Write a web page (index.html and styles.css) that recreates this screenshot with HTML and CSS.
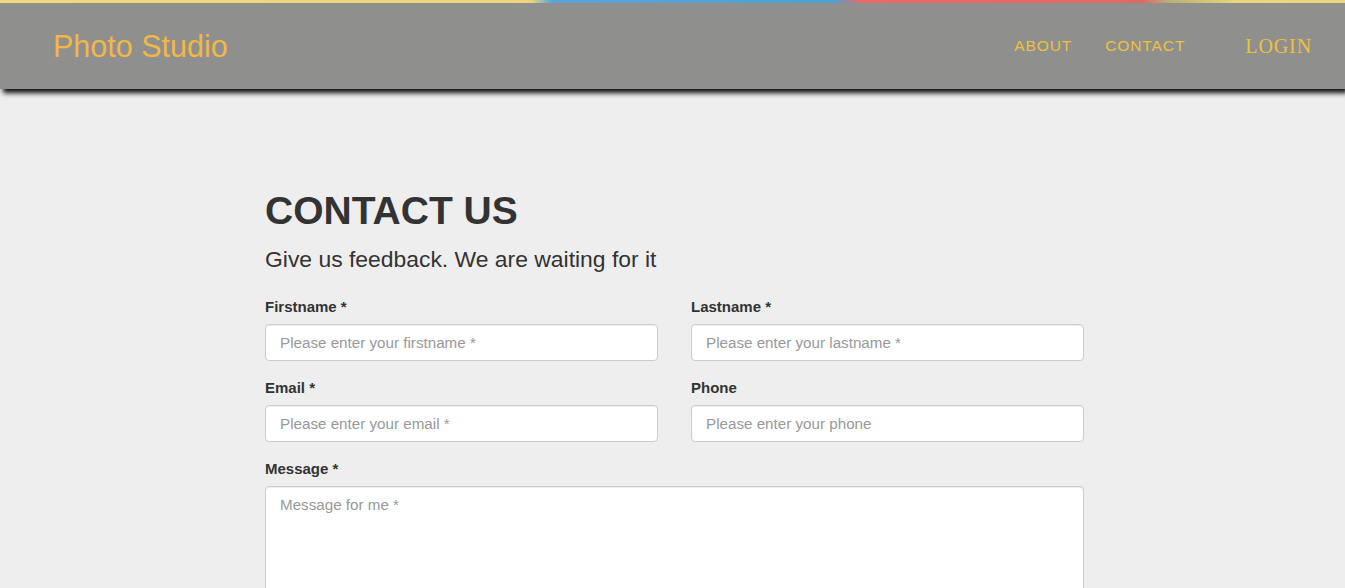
FILE: index.html
```html
<!DOCTYPE html>
<html lang="en">
<head>
<meta charset="utf-8">
<title>Photo Studio - Contact</title>
<link rel="stylesheet" href="styles.css">
</head>
<body>
<header class="navbar">
  <div class="stripe"></div>
  <div class="nav-inner">
    <a class="brand" href="#">Photo Studio</a>
    <nav class="nav-links">
      <a class="nav-link" href="#">ABOUT</a>
      <a class="nav-link" href="#">CONTACT</a>
      <a class="nav-login" href="#">LOGIN</a>
    </nav>
  </div>
</header>
<main class="content">
  <h1 class="title">CONTACT US</h1>
  <p class="lead">Give us feedback. We are waiting for it</p>
  <form class="form">
    <div class="field">
      <label class="label">Firstname *</label>
      <input class="input" type="text" placeholder="Please enter your firstname *">
    </div>
    <div class="field">
      <label class="label">Lastname *</label>
      <input class="input" type="text" placeholder="Please enter your lastname *">
    </div>
    <div class="field">
      <label class="label">Email *</label>
      <input class="input" type="email" placeholder="Please enter your email *">
    </div>
    <div class="field">
      <label class="label">Phone</label>
      <input class="input" type="tel" placeholder="Please enter your phone">
    </div>
    <div class="field field-wide">
      <label class="label">Message *</label>
      <textarea class="input textarea" placeholder="Message for me *"></textarea>
    </div>
  </form>
</main>
</body>
</html>
```

FILE: styles.css
```css
* { box-sizing: border-box; }
html, body { margin: 0; padding: 0; }
body {
  background: #eeeeee;
  font-family: "Liberation Sans", Arial, sans-serif;
  color: #333333;
  overflow: hidden;
}
.navbar {
  background: #8f908e;
  height: 89px;
  box-shadow: 3px 4px 5px rgba(0,0,0,0.95);
  position: relative;
  z-index: 2;
}
.stripe {
  height: 3px;
  background: linear-gradient(to right,
    #f2d87a 0%, #f0d47c 39.5%, #5aa6d8 41%, #4f9fd3 62%,
    #e86a6a 64%, #e26868 85%, #b8b07a 87%, #e8d77a 92%, #ead67c 100%);
}
.nav-inner {
  height: 86px;
  display: flex;
  align-items: center;
  justify-content: space-between;
  padding: 0 33px 0 53px;
}
.brand {
  color: #f3b746;
  font-size: 30.5px;
  text-decoration: none;
}
.nav-links {
  display: flex;
  align-items: center;
}
.nav-link {
  color: #eec13c;
  font-size: 15.5px;
  letter-spacing: 0.9px;
  text-decoration: none;
  margin-left: 33px;
}
.nav-link:first-child { margin-left: 0; }
.nav-login {
  color: #eec13c;
  font-family: "Liberation Serif", "Times New Roman", serif;
  font-size: 20px;
  letter-spacing: 0.9px;
  text-decoration: none;
  margin-left: 60px;
}
.content {
  width: 819px;
  margin: 0 auto;
  padding-top: 98px;
  transform: translateX(2px);
}
.title {
  margin: 0;
  font-size: 39px;
  font-weight: bold;
  line-height: 48px;
  color: #333;
}
.lead {
  margin: 9px 0 0;
  font-size: 22.9px;
  line-height: 30px;
  color: #333;
}
.form {
  margin-top: 24px;
  display: grid;
  grid-template-columns: 393px 393px;
  column-gap: 33px;
  row-gap: 18px;
}
.field { display: flex; flex-direction: column; }
.field-wide { grid-column: 1 / span 2; }
.label {
  font-size: 15px;
  font-weight: bold;
  line-height: 18px;
  margin-bottom: 8px;
  color: #333;
}
.input {
  height: 37px;
  background: #fff;
  border: 1px solid #cccccc;
  border-radius: 4px;
  box-shadow: inset 0 1px 1px rgba(0,0,0,0.075);
  padding: 6px 14px;
  font-family: "Liberation Sans", Arial, sans-serif;
  font-size: 15.2px;
  color: #555;
}
.input::placeholder { color: #999; }
.textarea {
  height: 140px;
  resize: none;
  padding-top: 9px;
}
```
